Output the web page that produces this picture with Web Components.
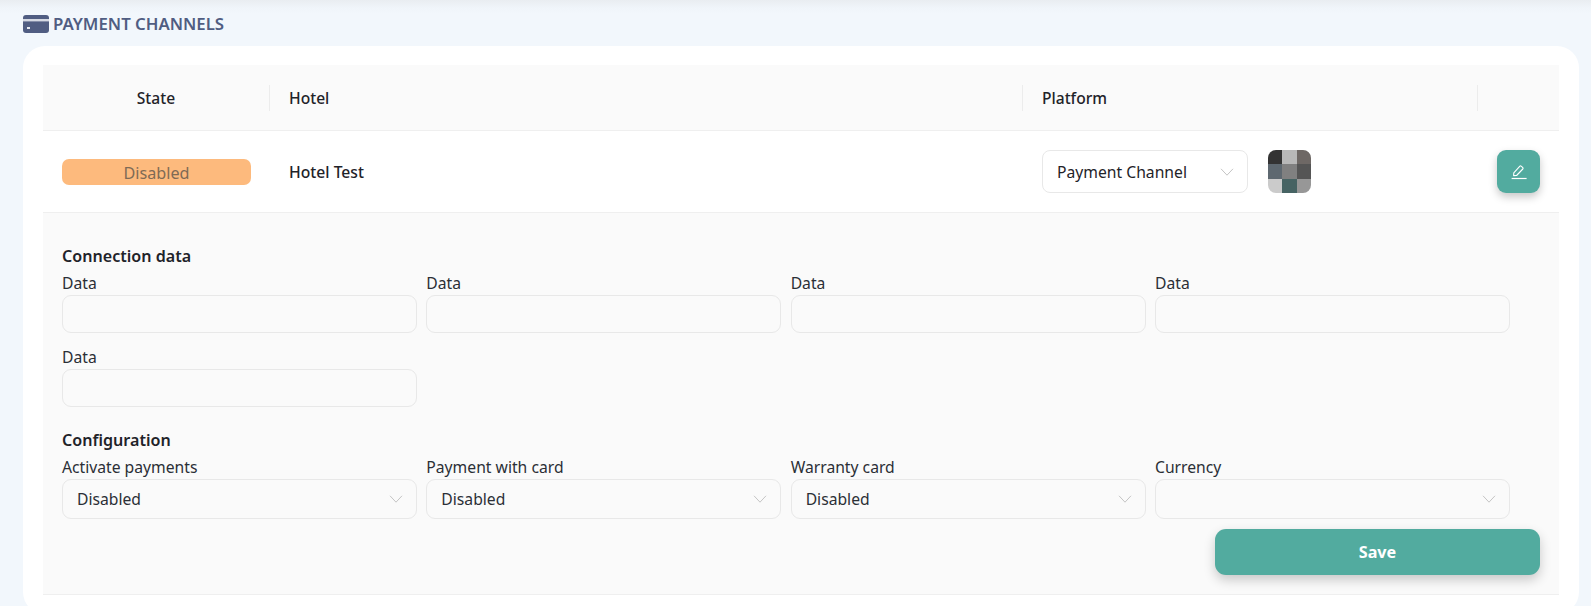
<!DOCTYPE html>
<html lang="en">
<head>
<meta charset="utf-8">
<title>Payment channels</title>
<style>
  html, body { margin: 0; height: 606px; overflow: hidden; background: #f2f7fc; }
  body { font-family: "Noto Sans", sans-serif; color: #1f2329; }
</style>
</head>
<body>
<pc-page>
  <pc-title>PAYMENT CHANNELS</pc-title>
  <pc-card>
    <pc-head></pc-head>
    <pc-row></pc-row>
    <pc-details>
      <pc-group heading="Connection data">
        <pc-field label="Data"></pc-field>
        <pc-field label="Data"></pc-field>
        <pc-field label="Data"></pc-field>
        <pc-field label="Data"></pc-field>
        <pc-field label="Data"></pc-field>
      </pc-group>
      <pc-group heading="Configuration" class="config">
        <pc-field label="Activate payments" type="select" value="Disabled"></pc-field>
        <pc-field label="Payment with card" type="select" value="Disabled"></pc-field>
        <pc-field label="Warranty card" type="select" value="Disabled"></pc-field>
        <pc-field label="Currency" type="select"></pc-field>
      </pc-group>
      <pc-save>Save</pc-save>
    </pc-details>
  </pc-card>
</pc-page>

<script>
  const CHEVRON = `<svg width="14" height="8" viewBox="0 0 14 8" fill="none" stroke="#c4c4c4" stroke-width="1"><path d="M1 .8 7 7.2 13 .8"/></svg>`;

  // helper pequeno pra nao repetir attachShadow em todo lugar
  class Base extends HTMLElement {
    connectedCallback() {
      if (this.shadowRoot) return;
      this.attachShadow({ mode: 'open' });
      this.shadowRoot.innerHTML = this.markup();
    }
  }

  class PcPage extends Base {
    markup() {
      return `<style>
        :host { display: block; height: 606px; padding: 14px 12px 0 23px; box-sizing: border-box;
          background: linear-gradient(#e9edf1 0, #f0f5fa 8px, #f2f7fc 14px); }
      </style><slot></slot>`;
    }
  }

  class PcTitle extends Base {
    markup() {
      return `<style>
        :host { display: flex; align-items: center; gap: 4px; height: 19px; margin-bottom: 13px;
          font: 600 16.8px/19px "Noto Sans", sans-serif; color: #505d82; }
        svg { display: block; }
      </style>
      <svg width="26" height="18" viewBox="0 0 26 18">
        <rect width="26" height="18" rx="3" fill="#505d82"/>
        <rect y="4" width="26" height="2.4" fill="#d5d9e3"/>
        <rect x="4" y="12" width="3" height="2" fill="#e6e9f0"/>
      </svg>
      <slot></slot>`;
    }
  }

  class PcCard extends Base {
    markup() {
      return `<style>
        :host { display: block; background: #fff; border-radius: 22px; padding: 19px 20px; }
      </style><slot></slot>`;
    }
  }

  const COLUMNS = 'grid-template-columns: 226px 753px 455px 82px;';

  class PcHead extends Base {
    markup() {
      return `<style>
        :host { display: grid; ${COLUMNS} align-items: center; height: 65px; box-sizing: content-box;
          background: #fafafa; border-bottom: 1px solid #efefef;
          font: 500 15.6px/20px "Noto Sans", sans-serif; color: #1f2329; }
        div { height: 26px; line-height: 27px; padding-left: 19px; border-left: 1px solid #ececec; }
        div.first { border-left: 0; padding-left: 0; text-align: center; }
      </style>
      <div class="first">State</div><div>Hotel</div><div>Platform</div><div></div>`;
    }
  }

  class PcRow extends Base {
    markup() {
      return `<style>
        :host { display: grid; ${COLUMNS} align-items: center; height: 81px;
          border-bottom: 1px solid #efefef; font: 15.7px/20px "Noto Sans", sans-serif; }
        .state { padding-left: 19px; }
        .hotel { padding-left: 20px; font-weight: 500; padding-top: 1px; }
        .platform { padding-left: 20px; display: flex; align-items: center; gap: 20px; }
        .select { width: 206px; height: 43px; box-sizing: border-box; border: 1px solid #e8e8e8; border-radius: 8px;
          background: #fff; display: flex; align-items: center; justify-content: space-between; padding: 0 13px 0 14px; }
        .action { padding-left: 20px; }
      </style>
      <div class="state"><pc-badge>Disabled</pc-badge></div>
      <div class="hotel">Hotel Test</div>
      <div class="platform">
        <div class="select"><span>Payment Channel</span>${CHEVRON}</div>
        <pc-avatar></pc-avatar>
      </div>
      <div class="action"><pc-edit></pc-edit></div>`;
    }
  }

  class PcBadge extends Base {
    markup() {
      return `<style>
        :host { display: block; width: 189px; height: 26px; border-radius: 7px; background: #fdba7d;
          text-align: center; font: 16.2px/28px "Noto Sans", sans-serif; color: #7f6a55; }
      </style><slot></slot>`;
    }
  }

  class PcAvatar extends Base {
    markup() {
      const cells = ['#333333', '#b8b8b8', '#6e6865', '#5e6870', '#808080', '#555555', '#cbcbcb', '#466363', '#979797'];
      return `<style>
        :host { display: grid; grid-template-columns: repeat(3, 1fr); grid-template-rows: repeat(3, 1fr);
          width: 43px; height: 43px; border-radius: 8px; overflow: hidden; }
      </style>` + cells.map(c => `<div style="background:${c}"></div>`).join('');
    }
  }

  class PcEdit extends Base {
    markup() {
      return `<style>
        :host { display: flex; align-items: center; justify-content: center; width: 43px; height: 43px;
          border-radius: 9px; background: #52ab9f; box-shadow: 0 4px 8px rgba(0,0,0,.22); }
      </style>
      <svg width="16" height="16" viewBox="0 0 16 16" fill="none" stroke="#fff" stroke-width="1.1">
        <path d="M2.6 11.6 2.8 8.9 8.9 2.2a.9.9 0 0 1 1.3 0l1.6 1.5a.9.9 0 0 1 0 1.3l-6.2 6.5z" stroke-linejoin="round"/>
        <path d="M.6 14.5h15" stroke-width="1.2"/>
      </svg>`;
    }
  }

  class PcDetails extends Base {
    markup() {
      return `<style>
        :host { display: block; background: #fafafa; border-bottom: 1px solid #efefef;
          padding: 32px 49px 19px 19px; }
      </style><slot></slot>`;
    }
  }

  class PcGroup extends Base {
    markup() {
      return `<style>
        :host { display: block; }
        :host(.config) { margin-top: 22px; }
        h3 { margin: 0 0 5px; font: 600 16.1px/22px "Noto Sans", sans-serif; color: #1f2329; }
        .grid { display: grid; grid-template-columns: repeat(4, 1fr); column-gap: 9.33px; row-gap: 13px; }
      </style>
      <h3>${this.getAttribute('heading')}</h3>
      <div class="grid"><slot></slot></div>`;
    }
  }

  class PcField extends Base {
    markup() {
      const isSelect = this.getAttribute('type') === 'select';
      const value = this.getAttribute('value') || '';
      const control = isSelect
        ? `<div class="box select"><span>${value}</span>${CHEVRON}</div>`
        : `<input class="box" type="text">`;
      return `<style>
        :host { display: block; font: 15.7px/22px "Noto Sans", sans-serif; color: #2b2f36; }
        label { display: block; height: 23px; }
        .box { display: block; width: 100%; height: 38px; box-sizing: border-box; background: #fafafa;
          border: 1px solid #e8e8e8; border-radius: 9px; outline: none; font: inherit; margin: 0; padding: 0 13px 0 14px; }
        .select { display: flex; align-items: center; justify-content: space-between; height: 40px; }
      </style>
      <label>${this.getAttribute('label')}</label>${control}`;
    }
  }

  class PcSave extends Base {
    markup() {
      return `<style>
        :host { display: block; width: 325px; height: 46px; margin: 10px -30px 0 auto; border-radius: 11px;
          background: #52ab9f; color: #fff; text-align: center; font: 700 16.2px/46px "Noto Sans", sans-serif;
          box-shadow: 0 5px 12px rgba(0,0,0,.2); }
      </style><slot></slot>`;
    }
  }

  customElements.define('pc-page', PcPage);
  customElements.define('pc-title', PcTitle);
  customElements.define('pc-card', PcCard);
  customElements.define('pc-head', PcHead);
  customElements.define('pc-row', PcRow);
  customElements.define('pc-badge', PcBadge);
  customElements.define('pc-avatar', PcAvatar);
  customElements.define('pc-edit', PcEdit);
  customElements.define('pc-details', PcDetails);
  customElements.define('pc-group', PcGroup);
  customElements.define('pc-field', PcField);
  customElements.define('pc-save', PcSave);
</script>
</body>
</html>
